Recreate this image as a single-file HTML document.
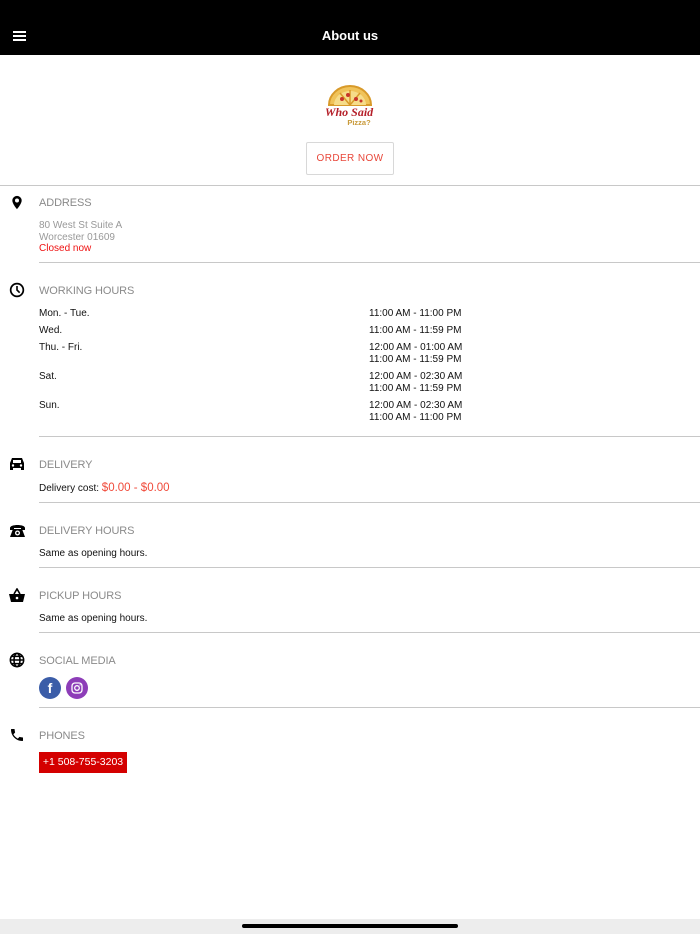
<!DOCTYPE html>
<html><head><meta charset="utf-8">
<style>
*{margin:0;padding:0;box-sizing:border-box}
body{width:700px;height:934px;position:relative;background:#fff;font-family:"Liberation Sans",Arial,sans-serif;overflow:hidden;color:#000}
.a{position:absolute}
.hdr{left:0;top:0;width:700px;height:55px;background:#000}
.title{left:0;width:700px;top:28px;text-align:center;color:#fff;font-weight:bold;font-size:13px}
.h{left:39px;font-size:11px;color:#8a8a8a;letter-spacing:-0.1px}
.t{font-size:10px;color:#111}
.line{height:1px;background:#c8c8c8;left:39px;width:661px}
.ic{left:9px}
</style></head><body>
<div class="a hdr"></div>
<div class="a" style="left:13px;top:31px;width:13px;height:2px;background:#fff"></div>
<div class="a" style="left:13px;top:35px;width:13px;height:2px;background:#fff"></div>
<div class="a" style="left:13px;top:39px;width:13px;height:2px;background:#fff"></div>
<div class="a title">About us</div>

<svg class="a" style="left:326px;top:83px" width="48" height="45" viewBox="0 0 48 45">
<path d="M3 22 A21 19 0 0 1 45 22 Z" fill="#f0c35a" stroke="#d89a2a" stroke-width="2"/>
<path d="M8 22 A16 14 0 0 1 40 22 Z" fill="#f6dc8a"/>
<path d="M24 22 L14 10 M24 22 L34 10 M24 22 L24 7" stroke="#d89a2a" stroke-width="1.5"/>
<circle cx="16" cy="16" r="2" fill="#c8342a"/><circle cx="22" cy="12" r="2" fill="#c8342a"/><circle cx="30" cy="16" r="2" fill="#c8342a"/><circle cx="35" cy="18" r="1.5" fill="#c8342a"/>
<text x="23" y="33" text-anchor="middle" font-family="Liberation Serif" font-style="italic" font-weight="bold" font-size="12" fill="#b5202a">Who Said</text>
<text x="33" y="42" text-anchor="middle" font-family="Liberation Sans" font-weight="bold" font-size="7.5" fill="#c89a3a">Pizza?</text>
</svg>
<div class="a" style="left:306px;top:142px;width:88px;height:33px;border:1px solid #d8d8d8;border-radius:2px;color:#e8473a;font-size:10px;letter-spacing:0.4px;text-align:center;line-height:31px">ORDER NOW</div>

<div class="a" style="left:0;top:185px;width:700px;height:1px;background:#c8c8c8"></div>

<svg class="a ic" style="top:194px" width="16" height="17" viewBox="0 0 24 24"><path d="M12 2a7 7 0 0 0-7 7c0 5 7 13 7 13s7-8 7-13a7 7 0 0 0-7-7zm0 10a3 3 0 1 1 0-6 3 3 0 0 1 0 6z" fill="#000"/></svg>
<div class="a h" style="top:197px">ADDRESS</div>
<div class="a" style="left:39px;top:220px;font-size:10px;color:#999;line-height:12px">80 West St Suite A<br>Worcester 01609</div>
<div class="a" style="left:39px;top:243px;font-size:10px;color:#ee1111">Closed now</div>
<div class="a line" style="top:262px"></div>

<svg class="a ic" style="top:282px" width="16" height="16" viewBox="0 0 24 24"><circle cx="12" cy="12" r="9.5" fill="none" stroke="#000" stroke-width="2.6"/><path d="M12 6v6l4 4" fill="none" stroke="#000" stroke-width="2.4"/></svg>
<div class="a h" style="top:285px">WORKING HOURS</div>
<div class="a t" style="left:39px;top:308px">Mon. - Tue.</div><div class="a t" style="left:369px;top:308px">11:00 AM - 11:00 PM</div>
<div class="a t" style="left:39px;top:325px">Wed.</div><div class="a t" style="left:369px;top:325px">11:00 AM - 11:59 PM</div>
<div class="a t" style="left:39px;top:342px">Thu. - Fri.</div><div class="a t" style="left:369px;top:342px;line-height:11.5px">12:00 AM - 01:00 AM<br>11:00 AM - 11:59 PM</div>
<div class="a t" style="left:39px;top:371px">Sat.</div><div class="a t" style="left:369px;top:371px;line-height:11.5px">12:00 AM - 02:30 AM<br>11:00 AM - 11:59 PM</div>
<div class="a t" style="left:39px;top:400px">Sun.</div><div class="a t" style="left:369px;top:400px;line-height:11.5px">12:00 AM - 02:30 AM<br>11:00 AM - 11:00 PM</div>
<div class="a line" style="top:436px"></div>

<svg class="a ic" style="top:457px" width="16" height="14" viewBox="0 0 16 14"><path d="M3 1h10l2 5v7h-3v-2H4v2H1V6z" fill="#000"/><rect x="4" y="3" width="8" height="3" fill="#fff"/><circle cx="4" cy="8.5" r="1.2" fill="#fff"/><circle cx="12" cy="8.5" r="1.2" fill="#fff"/></svg>
<div class="a h" style="top:459px">DELIVERY</div>
<div class="a t" style="left:39px;top:482px">Delivery cost: <span style="color:#f04a3a;font-size:11.5px">$0.00 - $0.00</span></div>
<div class="a line" style="top:502px"></div>

<svg class="a ic" style="top:523px" width="17" height="15" viewBox="0 0 17 15"><path d="M1 5c0-4 15-4 15 0v2h-4V5H5v2H1z" fill="#000"/><path d="M4 6h9l3 8H1z" fill="#000"/><circle cx="8.5" cy="10" r="2.5" fill="#fff"/><circle cx="8.5" cy="10" r="1.2" fill="#000"/></svg>
<div class="a h" style="top:525px">DELIVERY HOURS</div>
<div class="a t" style="left:39px;top:548px">Same as opening hours.</div>
<div class="a line" style="top:567px"></div>

<svg class="a ic" style="top:588px" width="16" height="15" viewBox="0 0 16 15"><path d="M5 6l3-5 3 5" fill="none" stroke="#000" stroke-width="1.6"/><path d="M0 6h16l-2 8H2z" fill="#000"/><circle cx="8" cy="10" r="1.3" fill="#fff"/></svg>
<div class="a h" style="top:590px">PICKUP HOURS</div>
<div class="a t" style="left:39px;top:613px">Same as opening hours.</div>
<div class="a line" style="top:632px"></div>

<svg class="a ic" style="top:652px" width="16" height="16" viewBox="0 0 24 24"><g fill="none" stroke="#000" stroke-width="2.3"><circle cx="12" cy="12" r="10"/><ellipse cx="12" cy="12" rx="4.5" ry="10"/><path d="M2 12h20M4 6.5h16M4 17.5h16"/></g></svg>
<div class="a h" style="top:655px">SOCIAL MEDIA</div>
<div class="a" style="left:39px;top:677px;width:22px;height:22px;border-radius:50%;background:#3b5da8;color:#fff;font-weight:bold;font-size:14px;text-align:center;line-height:23px">f</div>
<div class="a" style="left:66px;top:677px;width:22px;height:22px;border-radius:50%;background:#8d3db8"></div>
<svg class="a" style="left:71px;top:682px" width="12" height="12" viewBox="0 0 12 12"><rect x="1" y="1" width="10" height="10" rx="3" fill="none" stroke="#fff" stroke-width="1.3"/><circle cx="6" cy="6" r="2.3" fill="none" stroke="#fff" stroke-width="1.3"/><circle cx="9" cy="3" r="0.6" fill="#fff"/></svg>
<div class="a line" style="top:707px"></div>

<svg class="a ic" style="top:727px" width="16" height="16" viewBox="0 0 24 24"><path d="M6.6 10.8c1.4 2.8 3.8 5.1 6.6 6.6l2.2-2.2c.3-.3.7-.4 1-.2 1.1.4 2.300.6 3.6.6.6 0 1 .4 1 1V20c0 .6-.4 1-1 1C10.6 21 3 13.4 3 4c0-.6.4-1 1-1h3.5c.6 0 1 .4 1 1 0 1.3.2 2.5.6 3.6.1.3 0 .7-.2 1z" fill="#000"/></svg>
<div class="a h" style="top:730px">PHONES</div>
<div class="a" style="left:39px;top:752px;width:88px;height:21px;background:#d40000;color:#fff;font-size:10.5px;text-align:center;line-height:21px">+1 508-755-3203</div>

<div class="a" style="left:0;top:919px;width:700px;height:15px;background:#ededed"></div>
<div class="a" style="left:242px;top:924px;width:216px;height:4px;border-radius:2px;background:#000"></div>
</body></html>
